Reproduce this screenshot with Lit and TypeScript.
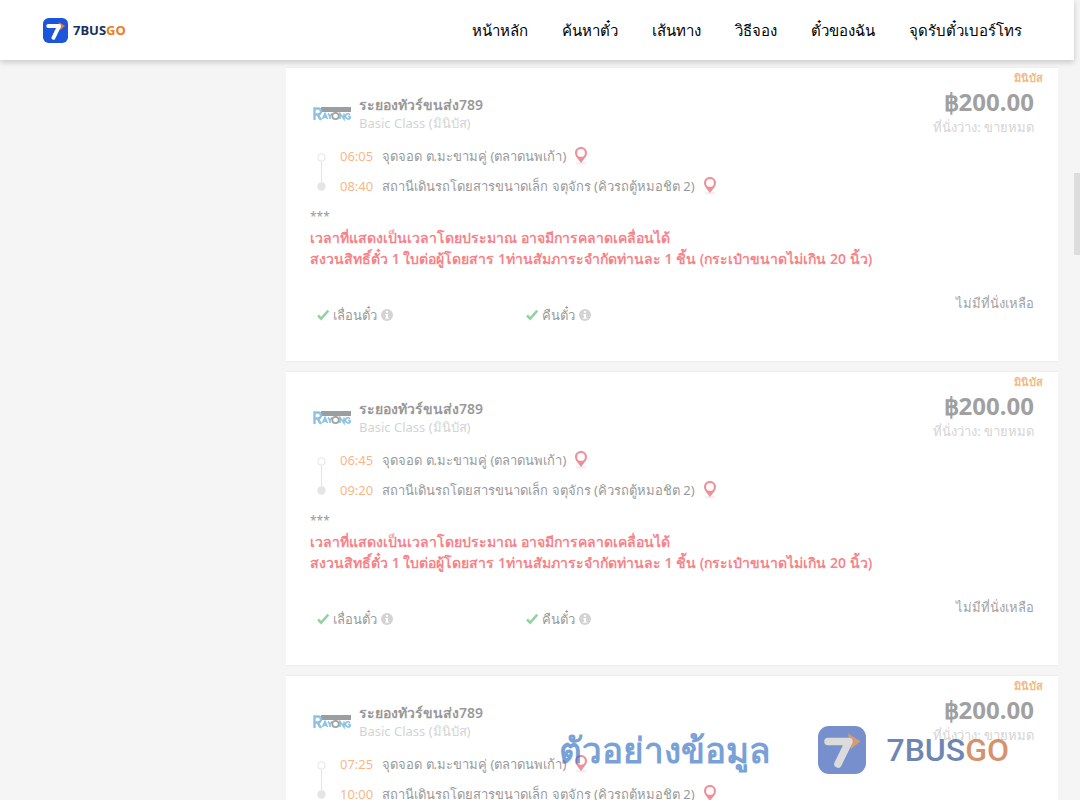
import { LitElement, html, css, svg } from "lit";
import { customElement, property } from "lit/decorators.js";

interface Trip {
  depart: string;
  arrive: string;
}

const NAV = ["หน้าหลัก", "ค้นหาตั๋ว", "เส้นทาง", "วิธีจอง", "ตั๋วของฉัน", "จุดรับตั๋วเบอร์โทร"];

const TRIPS: Trip[] = [
  { depart: "06:05", arrive: "08:40" },
  { depart: "06:45", arrive: "09:20" },
  { depart: "07:25", arrive: "10:00" },
];

const brandMark = svg`
  <rect class="tile" width="48" height="48" rx="11" />
  <path class="arrow" d="M30 7.500 L42.500 15.200 L33 23 Z" />
  <path class="seven" d="M10 15.500 H31 L20 38" />
`;

@customElement("brand-logo")
export class BrandLogo extends LitElement {
  @property({ type: Boolean, reflect: true }) large = false;

  static styles = css`
    :host {
      display: flex;
      align-items: center;
      gap: 5px;
      font: 700 13px/20px "Noto Sans", sans-serif;
      color: #17305c;
    }
    :host([large]) {
      gap: 20px;
      font: 500 32px/48px Roboto, sans-serif;
      color: #0d3782;
    }
    .mark {
      display: block;
      width: 25px;
      height: 25px;
    }
    :host([large]) .mark {
      width: 48px;
      height: 48px;
    }
    .tile {
      fill: #1b55dc;
    }
    .arrow {
      fill: #f0752b;
    }
    .seven {
      fill: none;
      stroke: #fff;
      stroke-width: 7.5px;
      stroke-linecap: round;
      stroke-linejoin: round;
    }
    :host([large]) .tile {
      fill: #1e48ac;
    }
    :host([large]) .arrow {
      fill: #c2571a;
    }
    :host([large]) .seven {
      stroke: #c4c4c4;
    }
    .go {
      color: #f07a22;
    }
    :host([large]) .go {
      color: #bb4d0a;
    }
  `;

  render() {
    return html`<svg class="mark" viewBox="0 0 48 48" aria-hidden="true">${brandMark}</svg
      ><span>7BUS<span class="go">GO</span></span>`;
  }
}

@customElement("trip-card")
export class TripCard extends LitElement {
  @property({ attribute: false }) trip!: Trip;

  static styles = css`
    :host {
      display: block;
      background: #fff;
      border: 1px solid #eee;
      border-width: 1px 0;
      font-size: 13px;
      line-height: 18px;
      color: #333;
    }
    .card {
      display: flex;
      justify-content: space-between;
      opacity: 0.5;
      padding: 0 15px 37px 24px;
    }
    .info {
      flex: 1;
      padding-top: 28px;
    }
    .head {
      display: flex;
      align-items: center;
      gap: 8px;
      padding-left: 3px;
    }
    .operator {
      display: block;
      width: 38px;
      height: 17px;
    }
    .name {
      margin: 0;
      font-size: 14px;
      line-height: 18px;
      font-weight: 600;
    }
    .class {
      margin: 0;
      color: #aaa;
    }
    .route {
      display: grid;
      grid-template-columns: 9px auto 1fr;
      column-gap: 9px;
      margin: 9px 0 0;
      padding: 0 0 0 7px;
      line-height: 30px;
    }
    .track {
      grid-row: 1 / 3;
      display: block;
      width: 9px;
      height: 40px;
      align-self: center;
    }
    .time {
      margin-left: 5px;
      color: #f26f0c;
    }
    .stop {
      display: flex;
      align-items: center;
      gap: 8px;
    }
    .pin {
      display: block;
      width: 14px;
      height: 19px;
    }
    .notes {
      margin: 5px 0 0;
      font-size: 12px;
      line-height: 21px;
    }
    .warn {
      display: block;
      font-size: 14px;
      font-weight: 600;
      color: #f00814;
    }
    .perks {
      display: grid;
      grid-template-columns: 209px 209px;
      margin: 37px 0 0;
      padding: 0 0 0 7px;
      list-style: none;
    }
    .perk {
      display: flex;
      align-items: center;
      gap: 4px;
      line-height: 18px;
    }
    .tick,
    .hint {
      display: block;
      width: 12px;
      height: 12px;
    }
    .fare {
      display: flex;
      flex-direction: column;
      align-items: flex-end;
      padding-top: 1px;
    }
    .kind {
      font-size: 11px;
      line-height: 17px;
      font-weight: 600;
      color: #f26f0c;
    }
    .price {
      margin-right: 9px;
      font-size: 24px;
      line-height: 32px;
      font-weight: 700;
      color: #444;
    }
    .seats {
      margin-right: 9px;
      color: #aaa;
    }
    .sold {
      margin: auto 9px 12px 0;
      color: #444;
    }
  `;

  private pin() {
    return html`<svg class="pin" viewBox="0 0 14 19" role="img" aria-label="แผนที่">
      <ellipse cx="7" cy="16" rx="5.500" ry="1.500" fill="#e4e4e4" />
      <path
        fill="#e02434"
        fill-rule="evenodd"
        d="M7 0C3.600 0 1 2.600 1 5.900c0 3.600 3.600 6.200 6 10.300 2.400-4.100 6-6.700 6-10.300C13 2.600 10.400 0 7 0Zm0 2a3.900 3.900 0 1 1 0 7.800A3.900 3.900 0 0 1 7 2Z"
      />
    </svg>`;
  }

  private perk(label: string) {
    return html`<li class="perk">
      <svg class="tick" viewBox="0 0 12 12" aria-hidden="true">
        <path d="M1 6.500 L4.200 9.700 L11.300 1.700" fill="none" stroke="#28a745" stroke-width="2.500" />
      </svg>
      <span>${label}</span>
      <svg class="hint" viewBox="0 0 12 12" aria-hidden="true">
        <circle cx="6" cy="6" r="6" fill="#aaa" />
        <path d="M5 2h2v1.800H5zM4.300 5H7v3.500h.8V9.700H4.300V8.500H5V6.200h-.7z" fill="#fff" />
      </svg>
    </li>`;
  }

  render() {
    return html`<article class="card">
      <div class="info">
        <header class="head">
          <svg class="operator" viewBox="0 0 38 17" role="img" aria-label="Rayong">
            <rect x="8" y="1" width="30" height="5" fill="#3a3f45" />
            <g fill="none" stroke="#1f86c8">
              <path d="M1.500 14V2.500H5a3 3 0 0 1 0 6H2M4.500 8.500 8 14" stroke-width="2.400" />
              <path d="M9.500 13 12 7.500 14.500 13M10.500 11.200h3M15 7.500l2 3 2-3M17 10.500V13" stroke-width="1.700" />
              <path d="M27 13V7.500L31 13V7.500M37 8.500c-2-1.500-4.500-.5-4.500 1.800 0 2.500 3 3.300 4.500 2V10.500h-2" stroke-width="1.700" />
              <circle cx="22.500" cy="10" r="3.200" stroke="#42474d" stroke-width="1.700" />
            </g>
          </svg>
          <div>
            <h2 class="name">ระยองทัวร์ขนส่ง789</h2>
            <p class="class">Basic Class (มินิบัส)</p>
          </div>
        </header>
        <div class="route">
          <svg class="track" viewBox="0 0 9 40" aria-hidden="true">
            <path d="M4.500 10V32" stroke="#ccc" />
            <circle cx="4.500" cy="6.500" r="3.700" fill="#fff" stroke="#ccc" />
            <circle cx="4.500" cy="35.500" r="4.200" fill="#ccc" />
          </svg>
          <time class="time">${this.trip.depart}</time>
          <span class="stop">จุดจอด ต.มะขามคู่ (ตลาดนพเก้า) ${this.pin()}</span>
          <time class="time">${this.trip.arrive}</time>
          <span class="stop">สถานีเดินรถโดยสารขนาดเล็ก จตุจักร (คิวรถตู้หมอชิต 2) ${this.pin()}</span>
        </div>
        <p class="notes">
          ***
          <span class="warn"
            >เวลาที่แสดงเป็นเวลาโดยประมาณ อาจมีการคลาดเคลื่อนได้<br />สงวนสิทธิ์ตั๋ว 1 ใบต่อผู้โดยสาร
            1ท่านสัมภาระจำกัดท่านละ 1 ชิ้น (กระเป๋าขนาดไม่เกิน 20 นิ้ว)</span
          >
        </p>
        <ul class="perks">
          ${this.perk("เลื่อนตั๋ว")} ${this.perk("คืนตั๋ว")}
        </ul>
      </div>
      <div class="fare">
        <span class="kind">มินิบัส</span>
        <strong class="price">฿200.00</strong>
        <span class="seats">ที่นั่งว่าง: ขายหมด</span>
        <span class="sold">ไม่มีที่นั่งเหลือ</span>
      </div>
    </article>`;
  }
}

@customElement("app-root")
export class AppRoot extends LitElement {
  static styles = css`
    :host {
      display: flex;
      flex-direction: column;
      position: relative;
      height: 100vh;
      overflow: hidden;
      background: #f5f5f5;
      font-family: "Noto Sans", sans-serif;
    }
    .top {
      flex: none;
      display: flex;
      align-items: center;
      justify-content: space-between;
      height: 60px;
      margin-right: 6px;
      padding: 0 52px 0 43px;
      box-sizing: border-box;
      background: #fff;
      box-shadow: 0 2px 6px rgba(0, 0, 0, 0.2);
    }
    .nav {
      display: flex;
      gap: 34px;
    }
    .link {
      font-size: 15px;
      line-height: 20px;
      color: #000;
      text-decoration: none;
      white-space: nowrap;
    }
    .home {
      display: block;
      text-decoration: none;
    }
    .list {
      display: grid;
      gap: 9px;
      margin: 7px 22px 0 286px;
    }
    .thumb {
      position: absolute;
      top: 173px;
      right: 0;
      width: 6px;
      height: 82px;
      background: #ddd;
    }
    .watermark {
      position: absolute;
      right: 71px;
      bottom: 26px;
      display: flex;
      align-items: center;
      gap: 48px;
      opacity: 0.6;
    }
    .sample {
      font-size: 35px;
      line-height: 48px;
      font-weight: 800;
      color: #1f63bd;
    }
  `;

  render() {
    return html`
      <header class="top">
        <a class="home" href="#"><brand-logo></brand-logo></a>
        <nav class="nav">${NAV.map((label) => html`<a class="link" href="#">${label}</a>`)}</nav>
      </header>
      <main class="list">${TRIPS.map((trip) => html`<trip-card .trip=${trip}></trip-card>`)}</main>
      <div class="watermark">
        <span class="sample">ตัวอย่างข้อมูล</span>
        <brand-logo large></brand-logo>
      </div>
      <div class="thumb"></div>
    `;
  }
}
